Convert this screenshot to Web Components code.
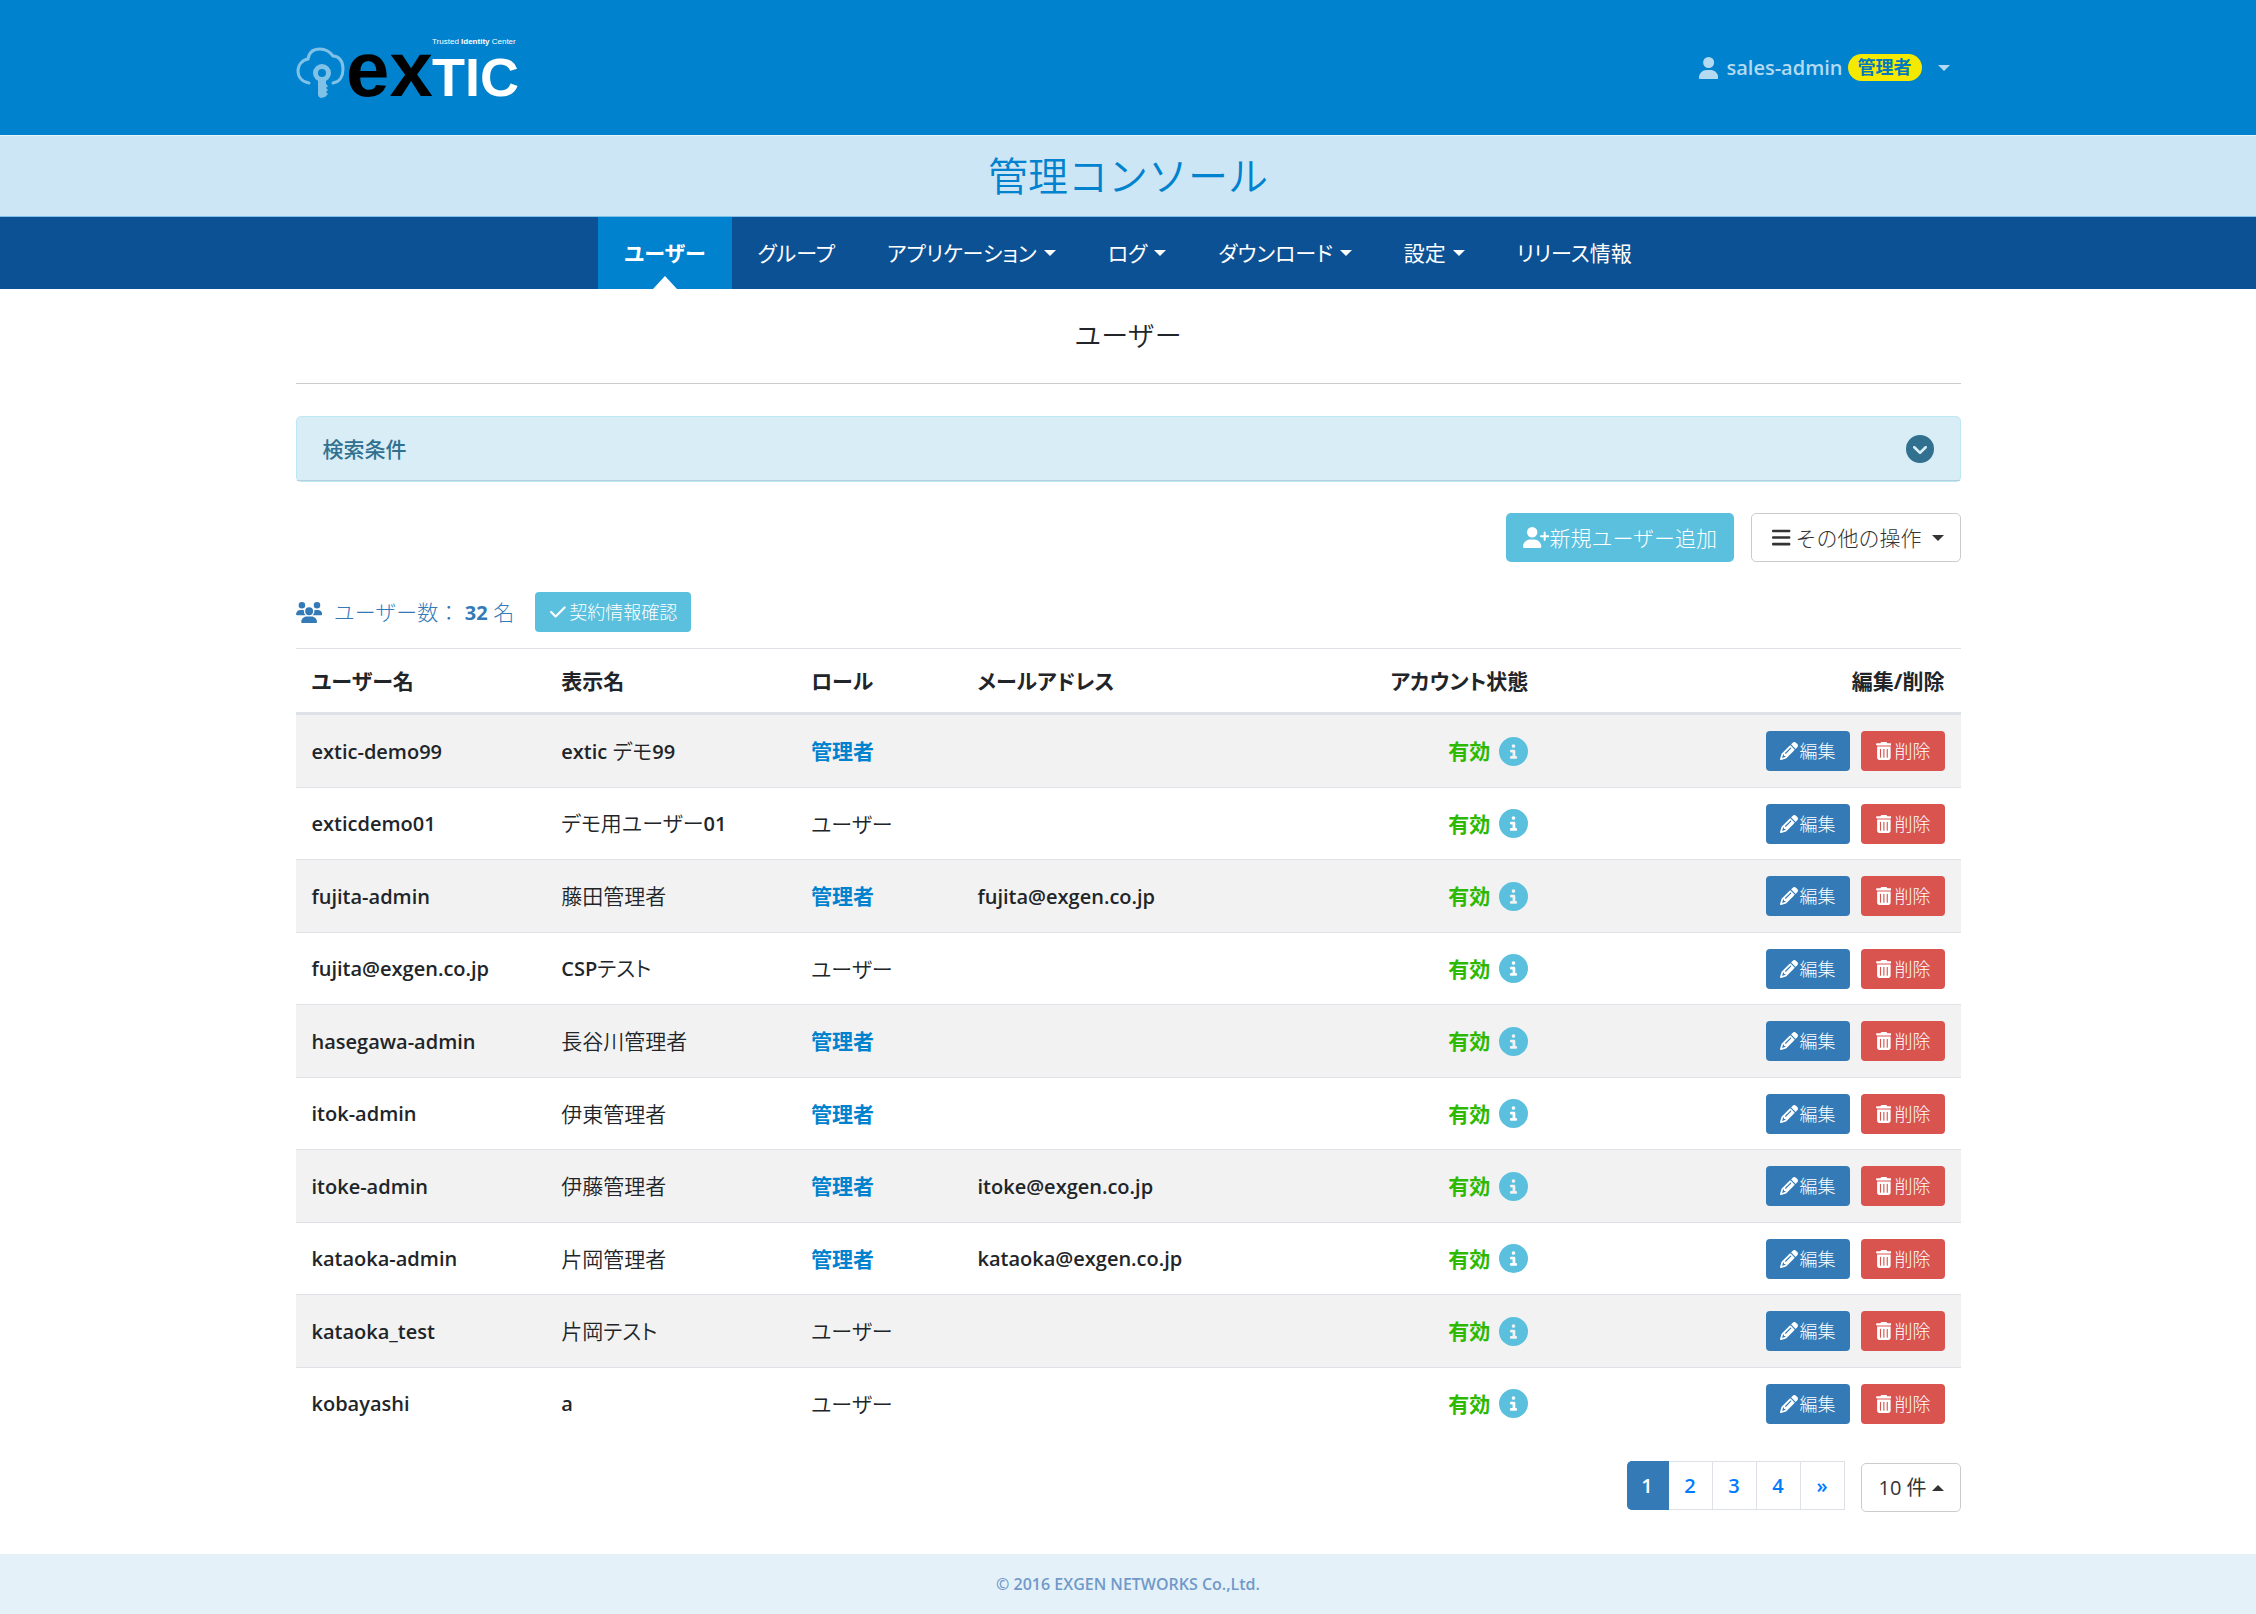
<!DOCTYPE html>
<html lang="ja">
<head>
<meta charset="utf-8">
<meta name="viewport" content="width=device-width, initial-scale=1">
<title>ユーザー | 管理コンソール</title>
<style>
    body {
        margin: 0;
        background: #fff;
        color: #212529;
        font-family: "Open Sans", "Noto Sans CJK JP", sans-serif;
        font-size: 21px;
        font-weight: 300;
        line-height: 30px;
        --primary: #0082ce;
        --blue: #337ab7;
        --info: #5bc0de;
        --danger: #d9534f;
        --container: 1665px;
    }
    main {
        box-sizing: border-box;
        max-width: var(--container);
        margin: 0 auto;
        padding-bottom: 42px;
    }
    .actions {
        display: flex;
        justify-content: flex-end;
        gap: 17px;
        margin: 31px 0 30px;
    }
    .summary {
        display: flex;
        align-items: center;
        gap: 21px;
        margin-bottom: 16px;
    }
    .paging {
        display: flex;
        justify-content: flex-end;
        align-items: flex-start;
        gap: 16px;
        min-height: 51px;
        margin-top: 21px;
    }
    page-size { align-self: flex-end; }
</style>
</head>
<body>
<site-header user="sales-admin" role-name="管理者"></site-header>
<console-band>管理コンソール</console-band>
<main-nav></main-nav>
<main>
    <page-title>ユーザー</page-title>
    <search-panel>検索条件</search-panel>
    <div class="actions">
        <app-button variant="info" icon="user-plus">新規ユーザー追加</app-button>
        <app-button variant="menu" icon="bars" caret>その他の操作</app-button>
    </div>
    <div class="summary">
        <user-count total="32"></user-count>
        <app-button variant="info" size="sm" icon="check">契約情報確認</app-button>
    </div>
    <user-table></user-table>
    <div class="paging">
        <page-links></page-links>
        <page-size></page-size>
    </div>
</main>
<site-footer>© 2016 EXGEN NETWORKS Co.,Ltd.</site-footer>

<script>
const ICONS = {
    'user': [448, 'M224 256A128 128 0 1 0 224 0a128 128 0 1 0 0 256zm-45.7 48C79.8 304 0 383.8 0 482.3C0 498.7 13.3 512 29.7 512l388.6 0c16.4 0 29.7-13.3 29.7-29.7C448 383.8 368.2 304 269.7 304l-91.4 0z'],
    'user-plus': [640, 'M96 128a128 128 0 1 1 256 0A128 128 0 1 1 96 128zM0 482.3C0 383.8 79.8 304 178.3 304l91.4 0C368.2 304 448 383.8 448 482.3c0 16.4-13.3 29.7-29.7 29.7L29.7 512C13.3 512 0 498.7 0 482.3zM504 312l0-64-64 0c-13.3 0-24-10.7-24-24s10.7-24 24-24l64 0 0-64c0-13.3 10.7-24 24-24s24 10.7 24 24l0 64 64 0c13.3 0 24 10.7 24 24s-10.7 24-24 24l-64 0 0 64c0 13.3-10.7 24-24 24s-24-10.7-24-24z'],
    'users': [640, 'M144 0a80 80 0 1 1 0 160A80 80 0 1 1 144 0zM512 0a80 80 0 1 1 0 160A80 80 0 1 1 512 0zM0 298.7C0 239.8 47.8 192 106.7 192l42.7 0c15.9 0 31 3.5 44.6 9.7c-1.3 7.2-1.9 14.7-1.9 22.3c0 38.2 16.8 72.5 43.3 96c-.2 0-.4 0-.7 0L21.3 320C9.6 320 0 310.4 0 298.7zM405.3 320c-.2 0-.4 0-.7 0c26.6-23.5 43.3-57.8 43.3-96c0-7.6-.7-15-1.9-22.3c13.6-6.3 28.7-9.7 44.6-9.7l42.7 0C592.2 192 640 239.8 640 298.7c0 11.8-9.6 21.3-21.3 21.3l-213.3 0zM224 224a96 96 0 1 1 192 0 96 96 0 1 1 -192 0zM128 485.3C128 411.7 187.7 352 261.3 352l117.3 0C452.3 352 512 411.7 512 485.3c0 14.7-11.9 26.7-26.7 26.7l-330.7 0c-14.7 0-26.7-11.9-26.7-26.7z'],
    'bars': [448, 'M24 64h400a24 24 0 0 1 24 24v16a24 24 0 0 1-24 24H24a24 24 0 0 1-24-24V88a24 24 0 0 1 24-24zM24 224h400a24 24 0 0 1 24 24v16a24 24 0 0 1-24 24H24a24 24 0 0 1-24-24v-16a24 24 0 0 1 24-24zM24 384h400a24 24 0 0 1 24 24v16a24 24 0 0 1-24 24H24a24 24 0 0 1-24-24v-16a24 24 0 0 1 24-24z'],
    'check': [448, 'M438.6 105.4c12.5 12.5 12.5 32.8 0 45.3l-256 256c-12.5 12.5-32.8 12.5-45.3 0l-128-128c-12.5-12.5-12.5-32.8 0-45.3s32.8-12.5 45.3 0L160 338.7 393.4 105.4c12.5-12.5 32.8-12.5 45.3 0z'],
    'info': [512, 'M256 512A256 256 0 1 0 256 0a256 256 0 1 0 0 512zM216 336l24 0 0-64-24 0c-13.3 0-24-10.7-24-24s10.7-24 24-24l48 0c13.3 0 24 10.7 24 24l0 88 8 0c13.3 0 24 10.7 24 24s-10.7 24-24 24l-80 0c-13.3 0-24-10.7-24-24s10.7-24 24-24zm40-208a32 32 0 1 1 0 64 32 32 0 1 1 0-64z'],
    'chevron': [512, 'M256 0a256 256 0 1 0 0 512A256 256 0 1 0 256 0zM135 241c-9.4-9.4-9.4-24.6 0-33.9s24.6-9.4 33.9 0l87 87 87-87c9.4-9.4 24.6-9.4 33.9 0s9.4 24.6 0 33.9L273 345c-9.4 9.4-24.6 9.4-33.9 0L135 241z'],
    'pencil': [512, 'M410.3 231l11.3-11.3-33.9-33.9-62.1-62.1L291.7 89.8l-11.3 11.3-22.6 22.6L58.6 322.9c-10.4 10.4-18 23.3-22.2 37.4L1 480.7c-2.5 8.4-.2 17.5 6.1 23.7s15.3 8.5 23.7 6.1l120.3-35.4c14.1-4.2 27-11.8 37.4-22.2L387.7 253.7 410.3 231zM160 399.4l-9.1 22.7c-4 3.1-8.5 5.4-13.3 6.9L59.4 452l23-78.1c1.4-4.9 3.8-9.4 6.9-13.3l22.7-9.1 0 32c0 8.8 7.2 16 16 16l32 0zM362.7 18.7L348.3 33.2 325.7 55.8 314.3 67.1l33.9 33.9 62.1 62.1 33.9 33.9 11.3-11.3 22.6-22.6 14.5-14.5c25-25 25-65.5 0-90.5L453.3 18.7c-25-25-65.5-25-90.5 0zm-47.4 168l-144 144c-6.2 6.2-16.4 6.2-22.6 0s-6.2-16.4 0-22.6l144-144c6.2-6.2 16.4-6.2 22.6 0s6.2 16.4 0 22.6z'],
    'trash': [448, 'M135.2 17.7C140.6 6.8 151.7 0 163.8 0L284.2 0c12.1 0 23.2 6.8 28.6 17.7L320 32l96 0c17.7 0 32 14.3 32 32s-14.3 32-32 32L32 96C14.3 96 0 81.7 0 64S14.3 32 32 32l96 0 7.2-14.3zM32 128l384 0 0 320c0 35.3-28.7 64-64 64L96 512c-35.3 0-64-28.7-64-64l0-320zm96 64c-8.8 0-16 7.2-16 16l0 224c0 8.8 7.2 16 16 16s16-7.2 16-16l0-224c0-8.8-7.2-16-16-16zm96 0c-8.8 0-16 7.2-16 16l0 224c0 8.8 7.2 16 16 16s16-7.2 16-16l0-224c0-8.8-7.2-16-16-16zm96 0c-8.8 0-16 7.2-16 16l0 224c0 8.8 7.2 16 16 16s16-7.2 16-16l0-224c0-8.8-7.2-16-16-16z'],
    'caret': [512, 'M0 128h512L256 384z'],
    'caret-up': [512, 'M0 384h512L256 128z']
};

// Small base class: every element puts its markup in an open shadow root
class BaseElement extends HTMLElement {
    constructor() {
        super();
        this.attachShadow({ mode: 'open' });
    }

    connectedCallback() {
        this.shadowRoot.innerHTML = this.template();
    }
}

class AppIcon extends BaseElement {
    template() {
        const [width, path] = ICONS[this.getAttribute('name')];
        return `
            <style>
                :host { display: inline-flex; flex: none; justify-content: center; }
                svg { display: block; height: var(--icon-size, 21px); fill: currentColor; }
            </style>
            <svg viewBox="0 0 ${width} 512" aria-hidden="true"><path d="${path}"/></svg>
        `;
    }
}
customElements.define('app-icon', AppIcon);

class SiteLogo extends BaseElement {
    template() {
        return `
            <style>
                :host { display: block; }
                svg { display: block; width: 228px; height: 96px; overflow: visible; }
                .ex { font: 700 78px "Liberation Sans", Arial, sans-serif; fill: #000; }
                .tic { font: 700 54px "Liberation Sans", Arial, sans-serif; fill: #fff; }
                .tag { font: 400 8px "Liberation Sans", Arial, sans-serif; fill: #fff; }
                .bold { font-weight: 700; }
            </style>
            <svg viewBox="0 -16 228 96" role="img" aria-label="extic">
                <g fill="none" stroke="#80c1e7" stroke-width="3" stroke-linecap="round">
                    <path d="M13 47C6 46 2 41 2 35C2 29 6 24 12 23C13 16 18 13 24 13C30 13 34 16 37 20C43 20 47 25 47 33C47 40 44 46 37 47"/>
                    <circle cx="26" cy="37" r="6.5" stroke-width="5"/>
                </g>
                <path fill="#80c1e7" d="M22 44h8v4l2 2-2 2 2 2-2 2 2 2-3 3-4 1q-3-1-3-4z"/>
                <text class="ex" x="50" y="60">ex</text>
                <text class="tic" x="136" y="60">TIC</text>
                <text class="tag" x="136" y="8">Trusted <tspan class="bold">Identity</tspan> Center</text>
            </svg>
        `;
    }
}
customElements.define('site-logo', SiteLogo);

class SiteHeader extends BaseElement {
    template() {
        return `
            <style>
                :host { display: block; background: var(--primary); }
                .inner {
                    display: flex;
                    align-items: center;
                    justify-content: space-between;
                    box-sizing: border-box;
                    max-width: var(--container);
                    height: 135px;
                    margin: 0 auto;
                }
                .user {
                    display: flex;
                    align-items: center;
                    padding: 0 11px;
                    border: 0;
                    background: none;
                    color: #b3daf0;
                    font: inherit;
                    font-weight: 600;
                    font-size: 20px;
                    cursor: pointer;
                }
                .name { margin: 0 5px 0 8px; }
                .badge {
                    padding: 0 10px;
                    border-radius: 14px;
                    background: #f6e900;
                    color: #0079c2;
                    font-size: 18px;
                    font-weight: 700;
                    line-height: 27px;
                    margin-right: 16px;
                }
            </style>
            <header class="inner">
                <site-logo></site-logo>
                <button class="user" type="button">
                    <app-icon name="user" style="--icon-size: 22px"></app-icon>
                    <span class="name">${this.getAttribute('user')}</span>
                    <span class="badge">${this.getAttribute('role-name')}</span>
                    <app-icon name="caret" style="--icon-size: 12px"></app-icon>
                </button>
            </header>
        `;
    }
}
customElements.define('site-header', SiteHeader);

class ConsoleBand extends BaseElement {
    template() {
        return `
            <style>
                :host {
                    display: block;
                    border-top: 1px solid #eaf4fb;
                    border-bottom: 1px solid #80c1e7;
                    background: #cde6f5;
                    color: var(--primary);
                    font-size: 40px;
                    font-weight: 350;
                    line-height: 80px;
                    text-align: center;
                }
            </style>
            <slot></slot>
        `;
    }
}
customElements.define('console-band', ConsoleBand);

class MainNav extends BaseElement {
    template() {
        const items = [
            ['ユーザー'], ['グループ'], ['アプリケーション', true], ['ログ', true],
            ['ダウンロード', true], ['設定', true], ['リリース情報']
        ];
        return `
            <style>
                :host { display: block; background: #0d5195; }
                ul {
                    display: flex;
                    justify-content: center;
                    margin: 0;
                    padding: 0;
                    list-style: none;
                }
                a {
                    display: flex;
                    align-items: center;
                    gap: 7px;
                    position: relative;
                    height: 72px;
                    padding: 0 26px;
                    color: #fff;
                    font-size: 21px;
                    font-weight: 400;
                    font-feature-settings: "palt";
                    text-decoration: none;
                }
                a.active { background: var(--primary); font-weight: 700; }
                a.active::after {
                    content: "";
                    position: absolute;
                    left: 50%;
                    bottom: 0;
                    margin-left: -12px;
                    border: 12px solid transparent;
                    border-top: 0;
                    border-bottom: 13px solid #fff;
                }
                app-icon { --icon-size: 12px; }
            </style>
            <nav><ul>
                ${items.map(([text, menu], i) => `
                    <li><a href="#" class="${i === 0 ? 'active' : ''}">${text}${menu ? '<app-icon name="caret"></app-icon>' : ''}</a></li>
                `).join('')}
            </ul></nav>
        `;
    }
}
customElements.define('main-nav', MainNav);

class PageTitle extends BaseElement {
    template() {
        return `
            <style>
                :host { display: block; margin-bottom: 32px; border-bottom: 1px solid #ccc; }
                h1 {
                    margin: 0;
                    font-size: 27px;
                    font-weight: 350;
                    line-height: 94px;
                    text-align: center;
                }
            </style>
            <h1><slot></slot></h1>
        `;
    }
}
customElements.define('page-title', PageTitle);

class SearchPanel extends BaseElement {
    template() {
        return `
            <style>
                :host {
                    display: block;
                    border: 1px solid #bce8f1;
                    border-radius: 5px;
                    background: #d9edf7;
                }
                button {
                    display: flex;
                    align-items: center;
                    justify-content: space-between;
                    width: 100%;
                    height: 64px;
                    padding: 0 26px;
                    border: 0;
                    border-bottom: 1px solid #b7d0dd;
                    background: none;
                    color: #31708f;
                    font: inherit;
                    font-weight: 500;
                    cursor: pointer;
                }
                app-icon { --icon-size: 28px; }
            </style>
            <button type="button" aria-expanded="false">
                <slot></slot>
                <app-icon name="chevron"></app-icon>
            </button>
        `;
    }
}
customElements.define('search-panel', SearchPanel);

class AppButton extends BaseElement {
    template() {
        const caret = this.hasAttribute('caret') ? '<app-icon class="caret" name="caret"></app-icon>' : '';
        return `
            <style>
                :host { display: inline-block; }
                button {
                    display: flex;
                    align-items: center;
                    box-sizing: border-box;
                    height: 49px;
                    padding: 0 16px;
                    border: 1px solid transparent;
                    border-radius: 5px;
                    color: #fff;
                    font: inherit;
                    font-weight: 300;
                    white-space: nowrap;
                    cursor: pointer;
                }
                .caret { --icon-size: 12px; }
                :host([variant="info"]) button { background: var(--info); }
                :host([variant="primary"]) button { background: var(--blue); }
                :host([variant="danger"]) button { background: var(--danger); }
                :host([variant="menu"]) button {
                    gap: 5px;
                    padding-left: 20px;
                    border-color: #ccc;
                    background: #fff;
                    color: #333;
                }
                :host([variant="menu"]) .caret { margin-left: 5px; }
                :host([size="sm"]) button {
                    --icon-size: 18px;
                    gap: 2px;
                    height: 40px;
                    padding: 0 13px;
                    border-radius: 4px;
                    font-size: 18px;
                }
                :host([size="sm"]) app-icon { width: 18px; }
            </style>
            <button type="button">
                <app-icon name="${this.getAttribute('icon')}"></app-icon>
                <slot></slot>${caret}
            </button>
        `;
    }
}
customElements.define('app-button', AppButton);

class UserCount extends BaseElement {
    template() {
        return `
            <style>
                :host { display: flex; align-items: center; gap: 12px; color: var(--blue); }
                b { font-size: 20px; font-weight: 700; }
            </style>
            <app-icon name="users"></app-icon>
            <span>ユーザー数： <b>${this.getAttribute('total')}</b> 名</span>
        `;
    }
}
customElements.define('user-count', UserCount);

class UserTable extends BaseElement {
    template() {
        const users = [
            ['extic-demo99', 'extic デモ99', '管理者', ''],
            ['exticdemo01', 'デモ用ユーザー01', 'ユーザー', ''],
            ['fujita-admin', '藤田管理者', '管理者', 'fujita@exgen.co.jp'],
            ['fujita@exgen.co.jp', 'CSPテスト', 'ユーザー', ''],
            ['hasegawa-admin', '長谷川管理者', '管理者', ''],
            ['itok-admin', '伊東管理者', '管理者', ''],
            ['itoke-admin', '伊藤管理者', '管理者', 'itoke@exgen.co.jp'],
            ['kataoka-admin', '片岡管理者', '管理者', 'kataoka@exgen.co.jp'],
            ['kataoka_test', '片岡テスト', 'ユーザー', ''],
            ['kobayashi', 'a', 'ユーザー', '']
        ];
        // Latin runs are set a step smaller and heavier than the Japanese around them
        const latin = text => text.replace(/[\x21-\x7e]+/g, '<span class="latin">$&</span>');
        return `
            <style>
                :host { display: block; }
                table {
                    width: 100%;
                    border-collapse: separate;
                    border-spacing: 0;
                    border-top: 1px solid #dee2e6;
                    table-layout: fixed;
                    font-feature-settings: "palt";
                }
                th, td { box-sizing: border-box; padding: 0 16px; text-align: left; white-space: nowrap; }
                th {
                    height: 66px;
                    border-bottom: 3px solid #dee2e6;
                    font-weight: 700;
                }
                td { height: 72px; border-bottom: 1px solid #dee2e6; font-weight: 350; }
                tr:nth-child(odd) td { height: 73px; background: #f2f2f2; }
                tr:nth-child(even) td { background: #fff; }
                tr:last-child td { border-bottom-color: transparent; }
                .w15 { width: 15%; }
                .w10 { width: 10%; }
                .w20 { width: 20%; }
                .w25 { width: 25%; }
                th.end { text-align: right; }
                .latin { font-size: 20px; font-weight: 600; }
                td.admin { color: var(--primary); font-weight: 700; }
                .cell { display: flex; align-items: center; justify-content: flex-end; gap: 11px; }
                .status { gap: 9px; }
                .active { color: #2db900; font-weight: 700; }
                .info {
                    --icon-size: 29px;
                    display: flex;
                    padding: 0;
                    border: 0;
                    background: none;
                    color: var(--info);
                    cursor: pointer;
                }
            </style>
            <table>
                <thead><tr>
                    <th class="w15">ユーザー名</th>
                    <th class="w15">表示名</th>
                    <th class="w10">ロール</th>
                    <th class="w20">メールアドレス</th>
                    <th class="w15 end">アカウント状態</th>
                    <th class="w25 end">編集/削除</th>
                </tr></thead>
                <tbody>
                ${users.map(([id, name, role, mail]) => `
                    <tr>
                        <td>${latin(id)}</td>
                        <td>${latin(name)}</td>
                        <td class="${role === '管理者' ? 'admin' : ''}">${role}</td>
                        <td>${latin(mail)}</td>
                        <td><div class="cell status"><span class="active">有効</span><button class="info" type="button" aria-label="詳細"><app-icon name="info"></app-icon></button></div></td>
                        <td><div class="cell"><app-button variant="primary" size="sm" icon="pencil">編集</app-button><app-button variant="danger" size="sm" icon="trash">削除</app-button></div></td>
                    </tr>
                `).join('')}
                </tbody>
            </table>
        `;
    }
}
customElements.define('user-table', UserTable);

class PageLinks extends BaseElement {
    template() {
        return `
            <style>
                :host { display: block; }
                nav { display: flex; }
                a {
                    box-sizing: border-box;
                    width: 44px;
                    border: 1px solid #dee2e6;
                    border-left: 0;
                    color: #007bff;
                    font-weight: 600;
                    font-size: 20px;
                    line-height: 47px;
                    text-align: center;
                    text-decoration: none;
                }
                a.current {
                    width: 42px;
                    border-color: var(--blue);
                    border-radius: 5px 0 0 5px;
                    background: var(--blue);
                    color: #fff;
                }
            </style>
            <nav aria-label="ページ">
                <a class="current" href="#">1</a><a href="#">2</a><a href="#">3</a><a href="#">4</a><a href="#">»</a>
            </nav>
        `;
    }
}
customElements.define('page-links', PageLinks);

class PageSize extends BaseElement {
    template() {
        return `
            <style>
                :host { display: grid; align-items: center; }
                select, app-icon { grid-area: 1 / 1; }
                select {
                    appearance: none;
                    height: 49px;
                    padding: 0 32px 0 17px;
                    border: 1px solid #ccc;
                    border-radius: 5px;
                    background: #fff;
                    color: #333;
                    font: inherit;
                    font-size: 20px;
                    font-weight: 400;
                }
                app-icon { --icon-size: 12px; justify-self: end; margin-right: 17px; color: #333; pointer-events: none; }
            </style>
            <select aria-label="表示件数"><option>10 件</option></select>
            <app-icon name="caret-up"></app-icon>
        `;
    }
}
customElements.define('page-size', PageSize);

class SiteFooter extends BaseElement {
    template() {
        return `
            <style>
                :host {
                    display: block;
                    background: #e4f1f9;
                    color: #7199c8;
                    font-size: 16px;
                    font-weight: 600;
                    line-height: 60px;
                    text-align: center;
                }
            </style>
            <footer><slot></slot></footer>
        `;
    }
}
customElements.define('site-footer', SiteFooter);
</script>
</body>
</html>
